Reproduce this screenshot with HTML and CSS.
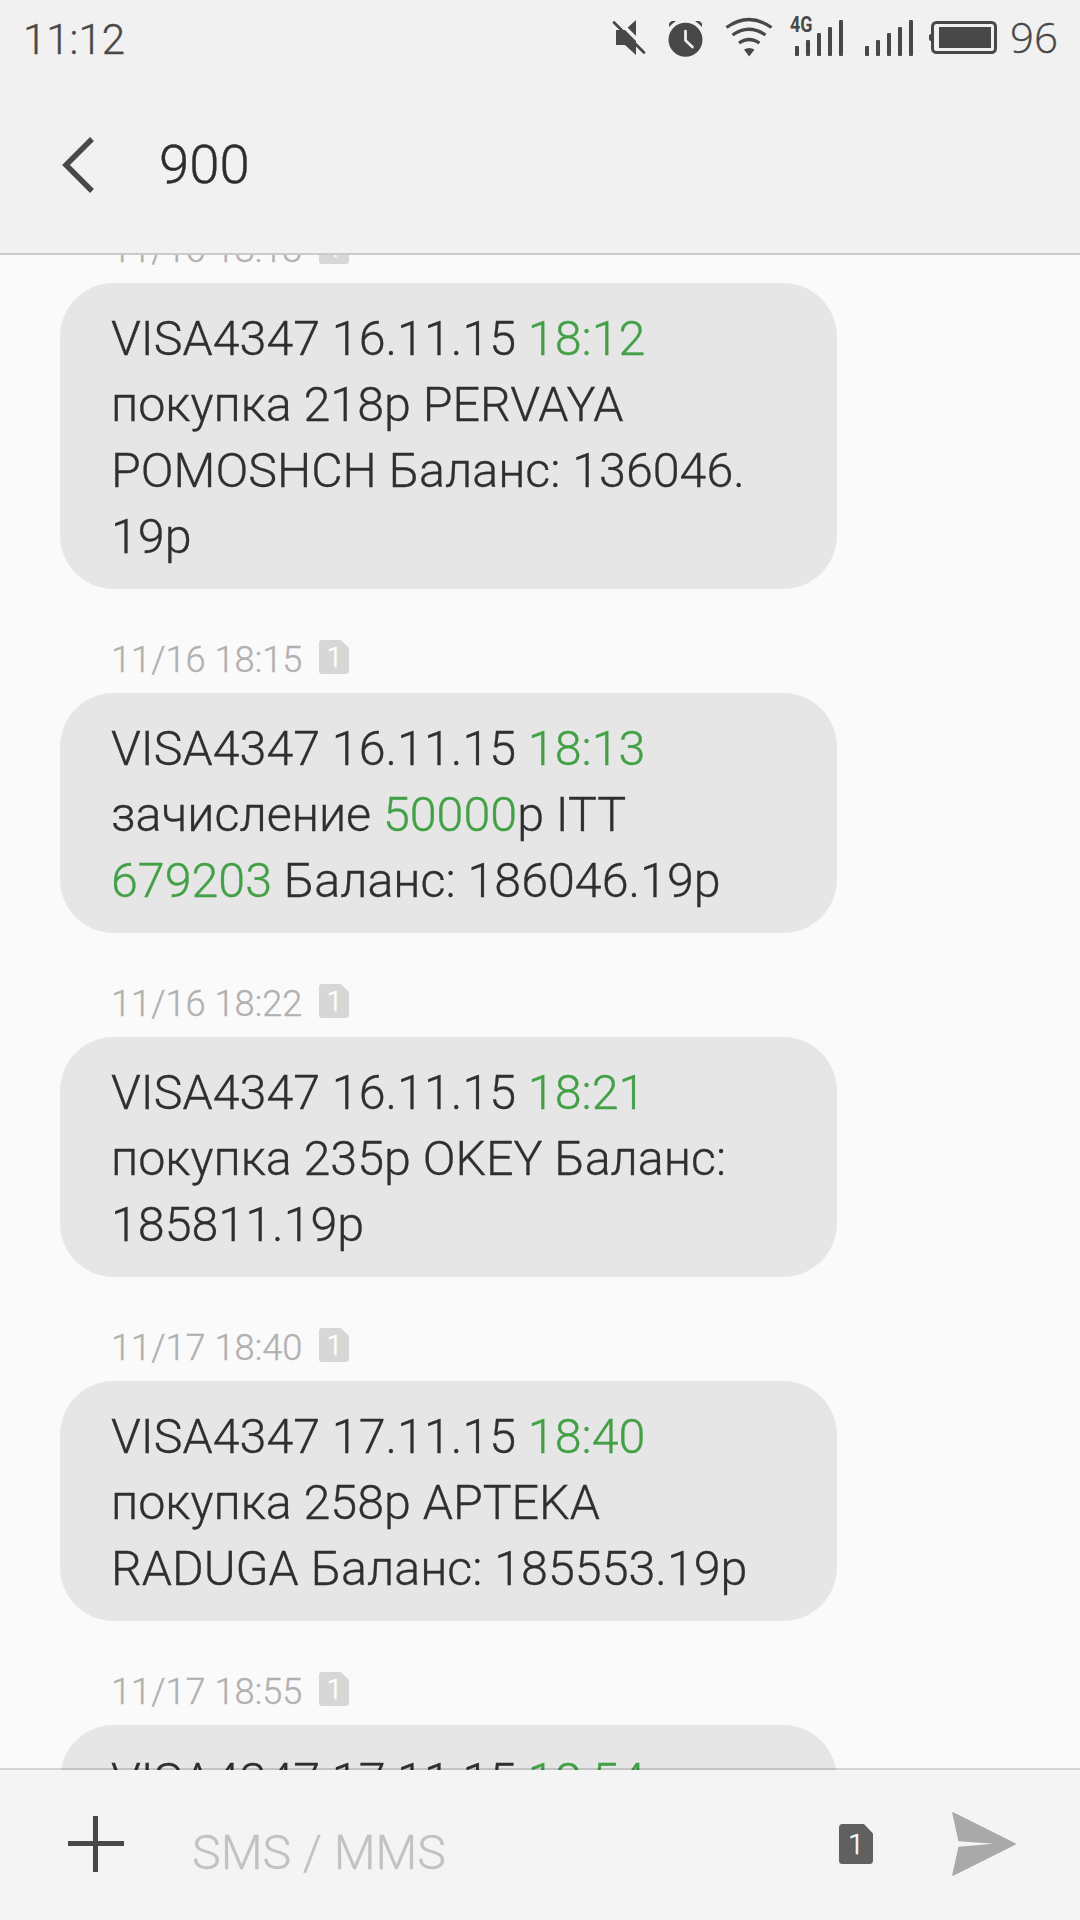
FILE: index.html
```html
<!DOCTYPE html>
<html lang="ru">
<head>
    <meta charset="UTF-8">
    <meta name="viewport" content="width=device-width, initial-scale=1.0">
    <title>900</title>
    <link rel="stylesheet" href="styles.css">
</head>
<body>

<svg class="defs">
    <symbol id="sim" viewBox="0 0 30 34">
        <path d="M3 0h19l8 8v23q0 3-3 3H3q-3 0-3-3V3q0-3 3-3z" fill="currentColor"/>
    </symbol>
</svg>

<div class="screen">
    <div class="statusbar">
        <span class="clock">11:12</span>
        <svg class="status-icons" width="402" height="80" viewBox="600 0 402 80">
            <!-- muted -->
            <path d="M616 30h9l11-10v35l-11-10h-9z" fill="#484848"/>
            <path d="M617 19.500l31 31" stroke="#f1f1f1" stroke-width="3.500"/>
            <path d="M614 22.500l30 30" stroke="#484848" stroke-width="2.800" stroke-linecap="round"/>
            <!-- alarm -->
            <circle cx="685.500" cy="39.800" r="17" fill="#484848"/>
            <path d="M669 27v-3q1-3 4-3h3q-3 2-7 6zM702 27v-3q-1-3-4-3h-3q3 2 7 6z" fill="#484848"/>
            <path d="M685.500 31v9.500l7 6.500" fill="none" stroke="#f1f1f1" stroke-width="2.700" stroke-linecap="round"/>
            <!-- wifi -->
            <g fill="none" stroke="#484848" stroke-width="3.200">
                <path d="M726.500 27.500q22.500-16 45 0"/>
                <path d="M732.500 35q16.500-11.500 33 0"/>
                <path d="M739 43q10-7 20.500 0"/>
            </g>
            <path d="M744 49.500q5-3 10.500 0l-5.300 7z" fill="#484848"/>
            <!-- signal -->
            <text class="net" x="790" y="32" textLength="22.500" lengthAdjust="spacingAndGlyphs">4G</text>
            <g fill="#484848">
                <rect x="795" y="46" width="4" height="10" rx="1"/>
                <rect x="806" y="40" width="4" height="16" rx="1"/>
                <rect x="817" y="33" width="4" height="23" rx="1"/>
                <rect x="828" y="27" width="4" height="29" rx="1"/>
                <rect x="839" y="20" width="4" height="36" rx="1"/>
                <rect x="865" y="46" width="4" height="10" rx="1"/>
                <rect x="876" y="40" width="4" height="16" rx="1"/>
                <rect x="887" y="33" width="4" height="23" rx="1"/>
                <rect x="898" y="27" width="4" height="29" rx="1"/>
                <rect x="909" y="20" width="4" height="36" rx="1"/>
            </g>
            <!-- battery -->
            <rect x="932.500" y="22.500" width="63" height="30" rx="4" fill="none" stroke="#484848" stroke-width="3"/>
            <rect x="939" y="27" width="52" height="21" fill="#484848"/>
            <path d="M931 34q-2 0-2 2v3q0 2 2 2z" fill="#484848"/>
        </svg>
        <span class="battery">96</span>
    </div>

    <div class="header">
        <svg class="back" width="34" height="58" viewBox="0 0 34 58">
            <path d="M32 3L6 29L32 55" fill="none" stroke="#484848" stroke-width="5.500"/>
        </svg>
        <h1 class="title">900</h1>
    </div>

    <div class="messages">
        <div class="stamp">11/16 18:13 <span class="sim"><svg width="30" height="34"><use href="#sim"/></svg><b>1</b></span></div>
        <div class="bubble">VISA4347 16.11.15 <span class="link">18:12</span><br>покупка 218р PERVAYA<br>POMOSHCH Баланс: 136046.<br>19р</div>

        <div class="stamp">11/16 18:15 <span class="sim"><svg width="30" height="34"><use href="#sim"/></svg><b>1</b></span></div>
        <div class="bubble">VISA4347 16.11.15 <span class="link">18:13</span><br>зачисление <span class="link">50000</span>р ITT<br><span class="link">679203</span> Баланс: 186046.19р</div>

        <div class="stamp">11/16 18:22 <span class="sim"><svg width="30" height="34"><use href="#sim"/></svg><b>1</b></span></div>
        <div class="bubble">VISA4347 16.11.15 <span class="link">18:21</span><br>покупка 235р OKEY Баланс:<br>185811.19р</div>

        <div class="stamp">11/17 18:40 <span class="sim"><svg width="30" height="34"><use href="#sim"/></svg><b>1</b></span></div>
        <div class="bubble">VISA4347 17.11.15 <span class="link">18:40</span><br>покупка 258р APTEKA<br>RADUGA Баланс: 185553.19р</div>

        <div class="stamp">11/17 18:55 <span class="sim"><svg width="30" height="34"><use href="#sim"/></svg><b>1</b></span></div>
        <div class="bubble">VISA4347 17.11.15 <span class="link">18:54</span></div>
    </div>

    <div class="composer">
        <svg class="plus" width="56" height="56" viewBox="0 0 56 56">
            <path d="M27.500 0v56M0 27.500h56" stroke="#484848" stroke-width="5"/>
        </svg>
        <div class="field">SMS / MMS</div>
        <span class="sim sim-active"><svg width="34" height="40" viewBox="0 0 30 34" preserveAspectRatio="none"><use href="#sim"/></svg><b>1</b></span>
        <svg class="send" width="64" height="64" viewBox="0 0 64 64">
            <path d="M1 1L63 32L1 63L7 35.500L41.500 32.500V31L7 28.500z" fill="#a9a9a9" stroke="#a9a9a9" stroke-width="1.500" stroke-linejoin="round"/>
        </svg>
    </div>
</div>

</body>
</html>
```
FILE: styles.css
```css
body {
    margin: 0;
    background-color: #fafafa;
    font-family: Roboto, "Liberation Sans", sans-serif;
    font-weight: 300;
}
.defs {
    display: none;
}
.screen {
    display: flex;
    flex-direction: column;
    height: 1920px;
    overflow: hidden;
    -webkit-text-stroke: 0.35px;
}

/* status bar */
.statusbar {
    display: flex;
    flex-shrink: 0;
    height: 80px;
    background-color: #f1f1f1;
    color: #484848;
    font-size: 42px;
    line-height: 79px;
}
.clock {
    flex: 1;
    padding-left: 23px;
}
.status-icons {
    display: block;
}
.net {
    font-family: Roboto, sans-serif;
    font-size: 22px;
    font-weight: 700;
    fill: #484848;
}
.battery {
    width: 70px;
    padding-left: 8px;
    line-height: 73px;
    font-family: "Open Sans", sans-serif;
}

/* title bar */
.header {
    display: flex;
    flex-shrink: 0;
    align-items: center;
    height: 173px;
    background-color: #f1f1f1;
    border-bottom: 2px solid #cbcbcb;
}
.back {
    margin: -3px 0 0 60px;
}
.title {
    margin: -6px 0 0 65px;
    color: #2d2d2d;
    font-size: 54.5px;
    font-weight: 300;
}

/* conversation */
.messages {
    display: flex;
    flex: 1;
    flex-direction: column;
    min-height: 0;
    overflow: hidden;
}
.stamp {
    display: flex;
    flex-shrink: 0;
    align-items: center;
    height: 104px;
    padding: 37px 0 0 111px;
    box-sizing: border-box;
    color: #b1b1b1;
    font-size: 36.2px;
    line-height: 42px;
}
.stamp:first-child {
    margin-top: -76px;
}
.bubble {
    flex-shrink: 0;
    width: 777px;
    margin-left: 60px;
    padding: 23px 20px 19px 51px;
    box-sizing: border-box;
    border-radius: 54px;
    background-color: #e6e6e6;
    color: #2f2f2f;
    font-size: 48.4px;
    line-height: 66px;
    white-space: nowrap;
}
.link {
    color: #43a047;
}

/* sim badge */
.sim {
    display: grid;
    margin: -5px 0 0 17px;
    color: #d7d7d7;
}
.sim svg,
.sim b {
    grid-area: 1 / 1;
}
.sim b {
    align-self: center;
    justify-self: center;
    padding-top: 2px;
    color: #fff;
    font-size: 28px;
    font-weight: 300;
    line-height: 32px;
    -webkit-text-stroke: 0.5px;
}

/* message input */
.composer {
    display: flex;
    flex-shrink: 0;
    align-items: center;
    height: 148px;
    margin-top: -2px;
    padding-bottom: 2px;
    border-top: 2px solid rgba(0, 0, 0, 0.15);
    background-color: #f4f4f4;
    background-clip: padding-box;
}
.plus {
    margin-left: 68px;
}
.field {
    flex: 1;
    margin-left: 68px;
    padding-top: 16px;
    color: #c2c2c2;
    font-size: 48.3px;
}
.sim-active {
    margin: 0;
    color: #606060;
}
.send {
    margin: 0 64px 0 79px;
}
```
